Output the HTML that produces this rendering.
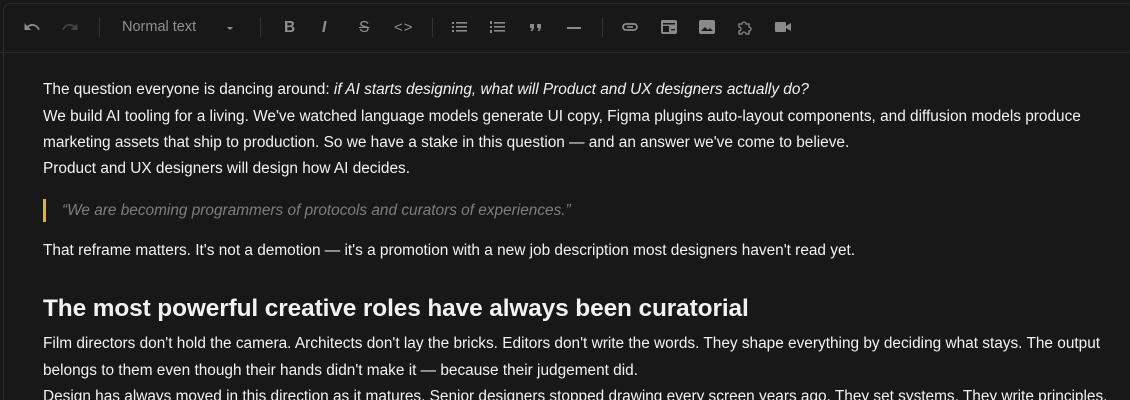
<!DOCTYPE html>
<html><head><style>
html,body{margin:0;padding:0;background:#181818;width:1130px;height:400px;overflow:hidden;position:relative}
body{font-family:"Liberation Sans",sans-serif;color:#f2f2f2}
.frame{position:absolute;left:3px;top:3px;width:1140px;height:410px;border:1px solid #2c2c2c;border-radius:8px;background:#181818}
.tb{position:absolute;left:0;top:0;width:1130px;height:52px;border-bottom:1px solid #2c2c2c}
.ic{position:absolute;top:18px;width:18px;height:18px}
.sep{position:absolute;top:17px;width:1px;height:20px;background:#333}
.t{position:absolute;left:43px;font-size:15.4px;white-space:nowrap;line-height:20px}
h2{position:absolute;left:43px;top:295px;margin:0;font-size:24.4px;font-weight:bold;white-space:nowrap;letter-spacing:-0.1px}
.q{position:absolute;left:43px;top:199px;width:3px;height:23px;background:#f0b400}
.tx{position:absolute;top:19px;font-size:14.5px;color:#8f8f8f}
</style></head><body>
<div class="frame"></div>
<div class="tb">
<svg class="ic" style="left:23px" viewBox="0 0 24 24"><path d="M12.5 8c-2.6 0-5 1-6.9 2.6L2 7v9h9l-3.6-3.6c1.4-1.2 3.1-1.9 5.1-1.9 3.5 0 6.5 2.3 7.6 5.5l2.4-.8C21 11.5 17.1 8 12.5 8z" fill="#8a8a8a"/></svg>
<svg class="ic" style="left:61px" viewBox="0 0 24 24"><path d="M11.5 8c2.6 0 5 1 6.9 2.6L22 7v9h-9l3.6-3.6c-1.4-1.2-3.1-1.9-5.1-1.9-3.5 0-6.5 2.3-7.6 5.5l-2.4-.8C3 11.5 6.9 8 11.5 8z" fill="#444"/></svg>
<div class="sep" style="left:99px"></div>
<div class="tx" style="left:122px">Normal text</div>
<div style="position:absolute;left:227px;top:27px;border:3px solid transparent;border-top:3px solid #8f8f8f;border-bottom:0"></div>
<div class="sep" style="left:260px"></div>
<div class="tx" style="left:284px;font-size:15.5px;font-weight:bold">B</div>
<div class="tx" style="left:322px;font-size:15.5px;font-weight:bold;font-style:italic">I</div>
<div class="tx" style="left:359px;font-size:15.5px;text-decoration:line-through">S</div>
<div class="tx" style="left:394px;font-size:15px;letter-spacing:1px">&lt;&gt;</div>
<div class="sep" style="left:432px"></div>
<svg class="ic" style="left:451px" viewBox="0 0 18 18" fill="#8a8a8a"><rect x="1" y="4" width="2" height="2"/><rect x="5" y="4" width="11" height="1.6"/><rect x="1" y="8" width="2" height="2"/><rect x="5" y="8" width="11" height="1.6"/><rect x="1" y="12" width="2" height="2"/><rect x="5" y="12" width="11" height="1.6"/></svg>
<svg class="ic" style="left:489px" viewBox="0 0 18 18" fill="#8a8a8a"><rect x="1" y="3" width="2" height="3"/><rect x="5" y="4" width="11" height="1.6"/><rect x="1" y="8" width="2" height="2"/><rect x="5" y="8" width="11" height="1.6"/><rect x="1" y="12" width="2" height="3"/><rect x="5" y="12" width="11" height="1.6"/></svg>
<svg class="ic" style="left:527px" viewBox="0 0 18 18" fill="#8a8a8a"><path d="M3 6h4v4l-1.5 3H3.5L5 10H3zM10 6h4v4l-1.5 3h-2L12 10h-2z"/></svg>
<div style="position:absolute;left:567px;top:27px;width:14px;height:2px;background:#8a8a8a"></div>
<div class="sep" style="left:602px"></div>
<svg class="ic" style="left:621px" viewBox="0 0 18 18" fill="none" stroke="#8a8a8a" stroke-width="1.7"><rect x="2" y="6" width="14" height="6" rx="3"/><path d="M6 9h6"/></svg>
<svg class="ic" style="left:660px" viewBox="0 0 18 18"><rect x="1" y="2" width="16" height="14" rx="2" fill="#8a8a8a"/><rect x="3" y="5" width="12" height="1.5" fill="#181818"/><rect x="3" y="8" width="6" height="6" fill="#181818"/><rect x="11" y="11" width="4" height="1.3" fill="#181818"/></svg>
<svg class="ic" style="left:698px" viewBox="0 0 18 18"><rect x="1" y="2" width="16" height="14" rx="2" fill="#8a8a8a"/><path d="M3 13l4-4 3 3 2-2 3 3z" fill="#181818"/></svg>
<svg class="ic" style="left:736px" viewBox="0 0 18 18" fill="none" stroke="#8a8a8a" stroke-width="1.3"><path d="M3 6h3a2 2 0 1 1 4 0h3v3a2 2 0 1 1 0 4v3h-3a2 2 0 1 0-4 0H3v-3a2 2 0 1 0 0-4z"/></svg>
<svg class="ic" style="left:774px" viewBox="0 0 18 18" fill="#8a8a8a"><rect x="1" y="4" width="11" height="10" rx="1"/><path d="M12 8l5-3v8l-5-3z"/></svg>
</div>
<div class="t" style="top:80px">The question everyone is dancing around: <i>if AI starts designing, what will Product and UX designers actually do?</i></div>
<div class="t" style="top:107px">We build AI tooling for a living. We've watched language models generate UI copy, Figma plugins auto-layout components, and diffusion models produce</div>
<div class="t" style="top:133px">marketing assets that ship to production. So we have a stake in this question — and an answer we've come to believe.</div>
<div class="t" style="top:159px">Product and UX designers will design how AI decides.</div>
<div class="q"></div>
<div class="t" style="top:201px;left:62px;color:#7d7d7d;font-style:italic">“We are becoming programmers of protocols and curators of experiences.”</div>
<div class="t" style="top:241px">That reframe matters. It's not a demotion — it's a promotion with a new job description most designers haven't read yet.</div>
<h2>The most powerful creative roles have always been curatorial</h2>
<div class="t" style="top:334px">Film directors don't hold the camera. Architects don't lay the bricks. Editors don't write the words. They shape everything by deciding what stays. The output</div>
<div class="t" style="top:361px">belongs to them even though their hands didn't make it — because their judgement did.</div>
<div class="t" style="top:387px">Design has always moved in this direction as it matures. Senior designers stopped drawing every screen years ago. They set systems. They write principles.</div>
</body></html>
